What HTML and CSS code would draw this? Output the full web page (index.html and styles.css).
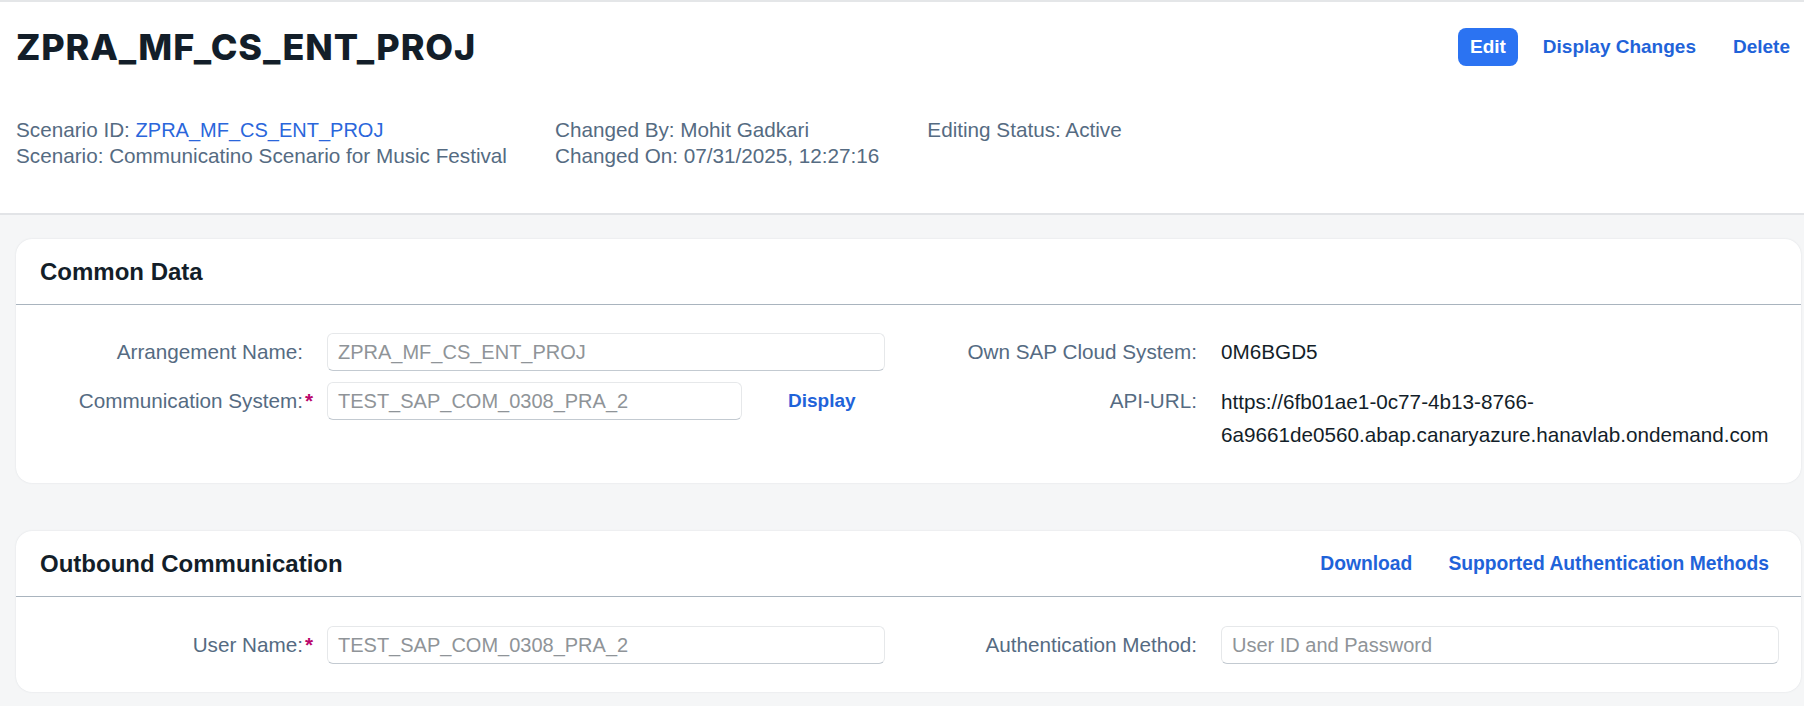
FILE: index.html
```html
<!DOCTYPE html>
<html lang="en">
<head>
<meta charset="utf-8">
<title>ZPRA_MF_CS_ENT_PROJ</title>
<link rel="stylesheet" href="styles.css">
</head>
<body>
<header class="op-header">
  <div class="title-row">
    <h1 class="title">ZPRA_MF_CS_ENT_PROJ</h1>
    <div class="actions">
      <button class="btn btn-emph">Edit</button>
      <button class="btn btn-trans">Display Changes</button>
      <button class="btn btn-trans">Delete</button>
    </div>
  </div>
  <div class="meta">
    <div class="meta-col">
      <div>Scenario ID: <a class="meta-link" href="#">ZPRA_MF_CS_ENT_PROJ</a></div>
      <div>Scenario: Communicatino Scenario for Music Festival</div>
    </div>
    <div class="meta-col">
      <div>Changed By: Mohit Gadkari</div>
      <div>Changed On: 07/31/2025, 12:27:16</div>
    </div>
    <div class="meta-col">
      <div>Editing Status: Active</div>
    </div>
  </div>
</header>

<main class="content">
  <section class="card card-common">
    <div class="card-head">
      <h2 class="card-title">Common Data</h2>
    </div>
    <div class="form">
      <div class="lbl c1 r1">Arrangement Name:</div>
      <div class="fld c2 r1"><div class="input">ZPRA_MF_CS_ENT_PROJ</div></div>
      <div class="lbl c4 r1">Own SAP Cloud System:</div>
      <div class="val c5 r1">0M6BGD5</div>

      <div class="lbl req c1 r2">Communication System:<span class="star">*</span></div>
      <div class="fld c2 r2 fld-row">
        <div class="input input-short">TEST_SAP_COM_0308_PRA_2</div>
        <button class="btn btn-trans btn-inline">Display</button>
      </div>
      <div class="lbl c4 r2">API-URL:</div>
      <div class="val val-url c5 r2">https://6fb01ae1-0c77-4b13-8766-6a9661de0560.abap.canaryazure.hanavlab.ondemand.com</div>
    </div>
  </section>

  <section class="card card-outbound">
    <div class="card-head">
      <h2 class="card-title">Outbound Communication</h2>
      <div class="card-actions">
        <button class="btn btn-trans btn-card">Download</button>
        <button class="btn btn-trans btn-card">Supported Authentication Methods</button>
      </div>
    </div>
    <div class="form">
      <div class="lbl req c1 r1">User Name:<span class="star">*</span></div>
      <div class="fld c2 r1"><div class="input">TEST_SAP_COM_0308_PRA_2</div></div>
      <div class="lbl c4 r1">Authentication Method:</div>
      <div class="fld c5 r1"><div class="input">User ID and Password</div></div>
    </div>
  </section>
</main>
</body>
</html>
```

FILE: styles.css
```css
* { box-sizing: border-box; }

html, body {
  margin: 0;
  padding: 0;
}

body {
  background: #f5f6f7;
  font-family: "Liberation Sans", Arial, sans-serif;
  font-size: 20.7px;
  color: #1d2d3e;
  width: 1804px;
  height: 706px;
  overflow: hidden;
}

/* ---------- Object page header ---------- */
.op-header {
  background: #ffffff;
  border-top: 2px solid #e4e6e8;
  border-bottom: 2px solid #e2e4e7;
  padding: 26px 2px 44px 16px;
}

.title-row {
  display: flex;
  justify-content: space-between;
  align-items: flex-start;
  height: 38px;
}

.title {
  margin: 2px 0 0;
  font-family: Inter, "Noto Sans", sans-serif;
  font-weight: 800;
  font-size: 36px;
  line-height: 34px;
  letter-spacing: 0.85px;
  color: #131e29;
}

.actions {
  display: flex;
  gap: 13px;
}

.btn {
  font-family: "Liberation Sans", Arial, sans-serif;
  font-size: 19px;
  font-weight: 700;
  height: 38px;
  padding: 0 12px;
  border: none;
  border-radius: 8px;
  background: transparent;
  color: #1f63d9;
  cursor: pointer;
  line-height: 38px;
}

.btn-card {
  font-size: 19.3px;
}

.btn-emph {
  background: #2b73f2;
  color: #ffffff;
}

.meta {
  display: flex;
  gap: 48px;
  margin-top: 51px;
  line-height: 26px;
  color: #556b82;
}

.meta-link {
  font-size: 20px;
  color: #2a66db;
  text-decoration: none;
}

/* ---------- Content ---------- */
.content {
  padding: 24px 3px 0 16px;
  display: flex;
  flex-direction: column;
  gap: 48px;
}

.card {
  background: #ffffff;
  border-radius: 16px;
  box-shadow: 0 0 2px rgba(34, 53, 72, 0.12);
}

.card-head {
  height: 66px;
  border-bottom: 1px solid #a9b4be;
  display: flex;
  align-items: center;
  justify-content: space-between;
  padding: 0 20px 0 24px;
}

.card-title {
  margin: 0;
  font-size: 24px;
  font-weight: 700;
  color: #131e29;
}

.card-actions {
  display: flex;
  gap: 12px;
}

.form {
  display: grid;
  grid-template-columns: 299px 558px minmax(0, 1fr) 299px 558px;
  column-gap: 12px;
  row-gap: 11px;
  padding: 28px 22px 29px 0;
}

.card-common .form { padding-bottom: 32px; }

.card-outbound .form { padding-top: 29px; padding-bottom: 28px; }

.c1 { grid-column: 1; }
.c2 { grid-column: 2; }
.c4 { grid-column: 4; }
.c5 { grid-column: 5; }
.r1 { grid-row: 1; }
.r2 { grid-row: 2; }

.lbl {
  justify-self: end;
  align-self: start;
  line-height: 38px;
  padding-right: 12px;
  color: #556b82;
  white-space: nowrap;
}

.lbl.req { padding-right: 0; }

.star {
  display: inline-block;
  width: 10px;
  margin-left: 2px;
  color: #ba066c;
  font-weight: 700;
  text-align: left;
}

.fld {
  align-self: start;
}

.fld-row {
  display: flex;
  align-items: center;
}

.input {
  height: 38px;
  line-height: 36px;
  padding: 0 10px;
  font-size: 20px;
  border: 1px solid #e6e8ea;
  border-bottom-color: #c3cad1;
  border-radius: 6px;
  background: #ffffff;
  color: #8f9498;
  white-space: nowrap;
  overflow: hidden;
}

.input-short {
  width: 415px;
  flex: none;
}

.btn-inline {
  margin-left: 34px;
}

.val {
  align-self: start;
  line-height: 38px;
  color: #131e29;
}

.val-url {
  line-height: 33px;
  padding-top: 3px;
}
```
